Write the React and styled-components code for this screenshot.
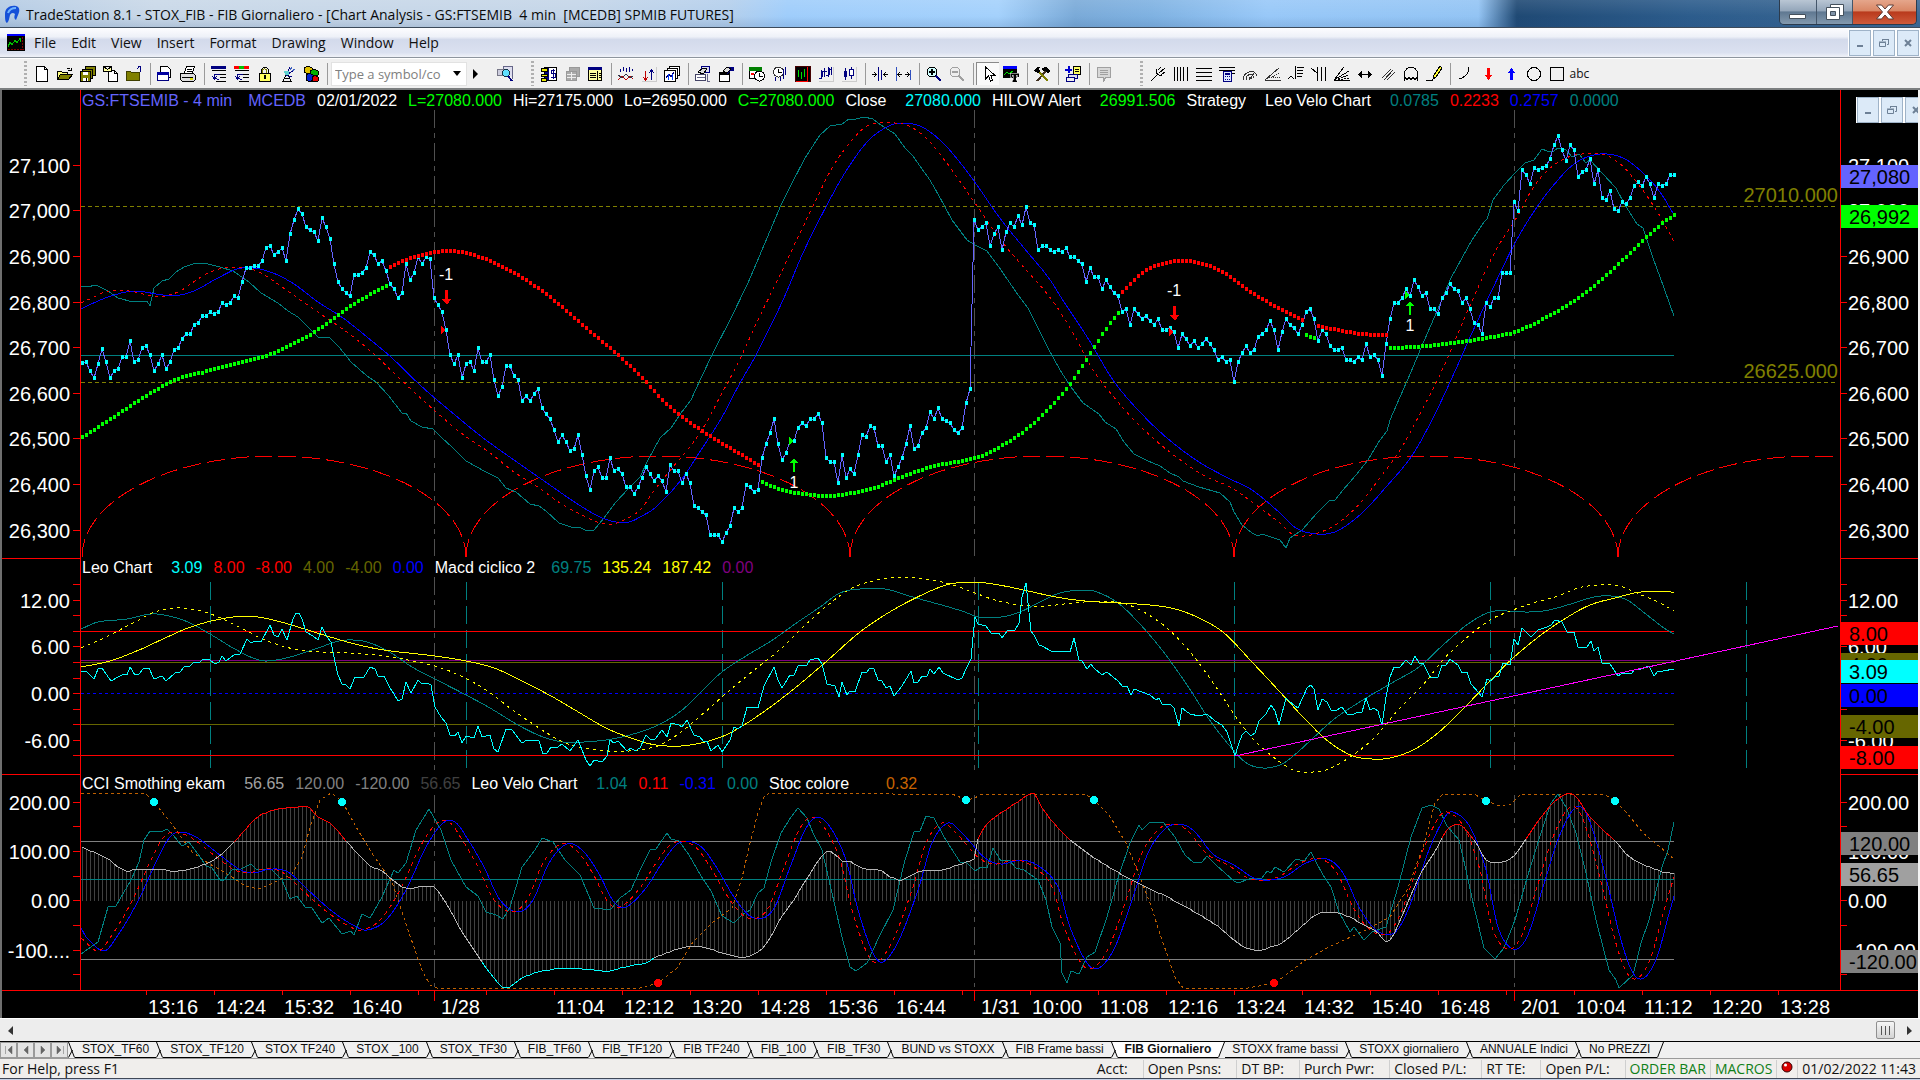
import { Fragment } from "react";
import styled, { createGlobalStyle } from "styled-components";

const GlobalStyle = createGlobalStyle`
  * {
    box-sizing: border-box;
  }

  body {
    margin: 0;
    background: #f0f0f0;
    font-family: "Open Sans", "Noto Sans", sans-serif;
    color: #111;
  }

  button {
    font: inherit;
    color: inherit;
    padding: 0;
    border: 0;
    background: none;
  }
`;

/* ---------- helpers ---------- */

const FIRST_BAR = 82;
const LAST_BAR = 1674;
const BAR_STEP = 4;

const toPoints = (text) =>
  text
    .trim()
    .split(/\s+/)
    .map((pair) => pair.split(",").map(Number));

// cubic interpolation between the key points of a curve
const valueAt = (pts, x) => {
  let i = 1;
  while (i < pts.length - 1 && pts[i][0] < x) i++;
  const p1 = pts[i - 1];
  const p2 = pts[i];
  const p0 = pts[i - 2] || p1;
  const p3 = pts[i + 1] || p2;
  const w = p2[0] - p1[0];
  const t = Math.min(1, Math.max(0, (x - p1[0]) / w));
  const m1 = ((p2[1] - p0[1]) / (p2[0] - p0[0])) * w;
  const m2 = ((p3[1] - p1[1]) / (p3[0] - p1[0])) * w;
  const t2 = t * t;
  const t3 = t2 * t;
  return (
    (2 * t3 - 3 * t2 + 1) * p1[1] +
    (t3 - 2 * t2 + t) * m1 +
    (3 * t2 - 2 * t3) * p2[1] +
    (t3 - t2) * m2
  );
};

const smooth = (pts) => {
  const start = pts[0][0];
  const end = Math.min(LAST_BAR, pts[pts.length - 1][0]);
  const out = [];
  for (let x = start; x < end; x += 2) out.push(`${x},${valueAt(pts, x).toFixed(1)}`);
  out.push(`${end},${valueAt(pts, end).toFixed(1)}`);
  return out.join(" ");
};

const barsBetween = (from, to) => {
  const out = [];
  for (let x = FIRST_BAR; x <= to; x += BAR_STEP) if (x >= from) out.push(x);
  return out;
};

/* ---------- series ---------- */

const PRICE = [
  363, 362, 371, 378, 364, 349, 362, 378, 371, 369, 357, 357, 341, 362, 360, 348, 346, 355, 371, 364,
  355, 369, 362, 350, 348, 339, 334, 334, 325, 323, 316, 316, 312, 314, 312, 303, 305, 303, 296, 298,
  282, 268, 268, 266, 266, 261, 248, 246, 255, 252, 248, 261, 234, 220, 209, 214, 227, 230, 232, 241,
  218, 227, 239, 264, 282, 289, 293, 296, 275, 275, 273, 268, 252, 255, 264, 261, 271, 284, 289, 298,
  293, 264, 280, 273, 257, 264, 257, 259, 298, 305, 312, 330, 355, 364, 355, 378, 364, 362, 371, 348,
  362, 362, 355, 380, 396, 387, 366, 366, 376, 380, 401, 396, 401, 394, 389, 408, 414, 419, 430, 442,
  435, 442, 451, 449, 435, 455, 476, 490, 471, 467, 478, 478, 458, 471, 469, 474, 487, 487, 494, 487,
  478, 467, 474, 481, 476, 481, 492, 465, 471, 471, 483, 474, 483, 506, 508, 512, 515, 535, 535, 535,
  542, 533, 526, 508, 512, 508, 485, 487, 492, 490, 458, 444, 433, 419, 444, 460, 453, 441, 441, 428,
  423, 426, 419, 419, 414, 423, 458, 462, 462, 483, 455, 478, 469, 474, 455, 435, 437, 426, 428, 446,
  446, 462, 455, 476, 467, 458, 444, 426, 449, 446, 433, 428, 412, 419, 408, 419, 421, 423, 430, 433,
  428, 403, 389, 220, 230, 227, 223, 246, 234, 227, 250, 232, 223, 227, 216, 225, 207, 223, 225, 250,
  246, 246, 250, 252, 250, 252, 248, 257, 257, 261, 264, 282, 268, 277, 277, 289, 280, 287, 293, 296,
  312, 309, 325, 309, 314, 319, 316, 321, 325, 319, 330, 330, 328, 332, 348, 334, 339, 346, 341, 348,
  344, 339, 344, 350, 360, 357, 362, 360, 382, 362, 353, 346, 353, 350, 337, 334, 330, 321, 330, 350,
  332, 319, 325, 328, 334, 325, 312, 309, 319, 341, 330, 334, 346, 350, 350, 348, 360, 360, 362, 357,
  360, 344, 357, 355, 360, 376, 344, 319, 303, 303, 298, 289, 296, 280, 287, 296, 293, 309, 309, 314,
  298, 293, 284, 289, 291, 303, 298, 309, 323, 325, 334, 303, 307, 298, 298, 273, 273, 273, 202, 211,
  170, 175, 184, 168, 170, 168, 166, 159, 145, 136, 150, 161, 145, 150, 177, 172, 170, 159, 184, 170,
  198, 200, 191, 209, 211, 202, 204, 198, 186, 182, 186, 177, 184, 198, 184, 186, 184, 175, 175,
];

const VELO_FAST = `81,286 87,287 96,285 108,291 118,298 133,302 147,301 150,306 154,288 162,281 169,279 176,272
184,267 196,263 204,263 220,267 233,271 249,282 261,293 278,303 288,311 298,317 308,327 318,337 330,338 339,347
351,362 367,376 376,382 388,395 402,413 406,413 411,421 422,427 433,429 441,437 453,448 466,461 486,472 498,478
506,488 516,492 530,504 539,506 546,511 559,523 571,527 579,527 587,531 594,530 604,518 616,502 629,488 640,477
648,460 660,438 671,428 681,413 691,400 701,378 713,353 730,320 748,283 762,250 781,205 791,185 805,158 820,135
830,126 842,124 849,119 856,119 864,117 873,119 881,125 895,134 905,148 913,156 922,169 928,177 934,187 944,205
952,220 967,240 975,245 987,251 1001,270 1016,292 1028,308 1038,328 1048,348 1060,370 1071,387 1083,403 1099,414
1105,422 1116,429 1124,442 1134,454 1148,461 1160,466 1170,473 1179,477 1183,481 1199,487 1220,493 1230,502
1234,512 1242,525 1252,533 1258,536 1262,534 1271,537 1280,540 1286,548 1290,538 1302,530 1317,513 1329,501
1335,500 1343,490 1356,475 1368,460 1378,443 1387,431 1390,420 1400,397 1411,372 1421,348 1431,325 1441,302
1451,278 1462,258 1472,240 1484,222 1487,219 1493,200 1504,185 1515,173 1525,163 1534,160 1542,149 1547,151
1554,151 1558,148 1566,150 1572,157 1579,154 1586,163 1590,160 1602,173 1616,188 1625,205 1637,224 1643,228
1653,258 1664,288 1674,316`;

const VELO_MID = toPoints(`81,303 94,297 105,292 118,290 135,292 151,296 165,296 180,291 192,283 208,273 224,268
245,268 261,273 282,287 306,304 331,321 351,335 376,356 400,379 434,410 461,433 490,453 514,472 539,488 563,505
584,516 600,523 612,524 624,520 640,510 656,488 673,467 689,448 705,425 722,393 738,363 758,320 779,277 799,235
816,200 832,168 848,145 864,128 877,123 895,123 909,126 926,138 946,162 975,203 1003,243 1028,272 1052,300
1073,333 1093,370 1118,402 1142,428 1171,453 1203,475 1232,488 1256,505 1280,523 1292,534 1304,536 1321,532
1341,521 1362,501 1382,475 1402,447 1423,408 1439,377 1456,338 1476,292 1496,250 1517,217 1533,188 1549,169
1566,158 1582,154 1602,154 1619,163 1635,180 1651,202 1664,223 1674,242`);

const VELO_SLOW = toPoints(`81,309 98,301 114,295 135,291 163,295 180,295 196,290 216,279 237,269 253,268 273,273
294,284 318,302 343,318 367,337 392,358 420,385 449,410 482,437 514,460 547,483 576,503 600,517 616,522 629,522
640,517 656,507 681,480 701,450 722,417 740,383 756,355 783,300 803,253 828,203 848,168 869,140 889,126 903,123
922,127 942,142 962,165 979,188 999,217 1024,248 1048,277 1064,302 1089,340 1113,380 1138,410 1167,438 1199,462
1228,478 1252,490 1280,513 1296,528 1317,534 1337,531 1362,513 1386,487 1411,457 1431,422 1451,380 1472,333
1492,290 1515,243 1537,207 1558,180 1574,164 1590,156 1607,154 1625,159 1643,173 1660,192 1674,215`);

const GREEN = "#00ff00";
const RED = "#ff0000";
const TEAL = "#008080";
const CYAN = "#00ffff";

const ALERTS = [
  { color: GREEN, d: "82,437 98,427 118,414 139,400 159,388 180,378 204,372 233,364 265,356 286,347 306,337 327,323 347,308 367,296 388,285" },
  { color: RED, d: "390,267 408,259 429,253 449,251 469,254 490,261 514,273 539,289 563,308 588,330 612,350 640,376 664,402 689,422 713,438 738,453 758,465" },
  { color: GREEN, d: "762,482 779,489 803,494 828,496 852,493 877,487 901,477 934,466 975,458 999,447 1024,431 1048,409 1069,385 1089,355 1105,330 1118,313" },
  { color: RED, d: "1122,292 1138,276 1154,266 1179,261 1199,263 1224,273 1252,293 1280,309 1304,321" },
  { color: GREEN, d: "1306,335 1314,338" },
  { color: RED, d: "1318,326 1337,330 1362,334 1387,335" },
  { color: GREEN, d: "1390,348 1415,347 1443,344 1468,341 1492,337 1515,332 1541,320 1566,306 1590,289 1615,267 1639,244 1660,225 1674,215" },
];

const SESSIONS = [434, 974, 1514];
const CYCLES = [210, 466, 722, 978, 1234, 1490, 1746];

const LEO = `81,672 86,671 89,674 94,679 98,669 102,668 111,681 118,677 124,674 127,675 130,667 135,675 139,674 143,669
149,668 154,679 162,676 166,681 175,673 180,672 184,667 190,666 194,662 199,663 203,659 210,660 215,664 219,662
222,656 226,661 235,654 240,654 247,639 251,643 255,641 261,642 270,625 274,635 278,637 282,629 287,640 293,619
296,613 299,613 302,619 306,632 313,636 318,640 322,627 327,637 331,642 334,657 338,675 342,684 346,685 350,689
355,677 364,677 370,667 375,669 378,676 384,676 390,688 394,694 398,701 402,699 406,682 411,693 418,680 422,684
427,683 431,685 435,707 441,717 446,723 450,735 455,736 458,732 462,743 466,736 474,738 478,726 482,737 490,735
494,749 498,752 506,729 512,730 522,743 527,740 539,741 543,754 547,753 551,747 558,747 562,744 570,751 578,740
582,750 586,760 590,766 594,760 602,762 607,756 610,740 614,743 618,741 627,751 631,748 635,751 640,748 646,735
650,739 655,739 662,730 667,737 671,723 679,725 682,727 687,720 694,735 700,737 703,741 707,741 711,751 718,745
722,752 730,740 734,727 738,729 742,726 747,707 758,708 764,686 774,667 778,680 782,688 790,675 794,675 798,666
807,665 810,660 818,658 822,664 827,684 835,686 839,697 842,682 847,695 850,691 855,692 862,672 866,673 870,668
874,669 878,680 882,681 886,688 890,686 894,696 902,686 911,671 914,683 918,682 922,676 927,676 930,669 934,674
939,667 943,673 958,680 962,678 967,667 971,659 973,637 975,617 978,624 986,626 991,633 999,633 1002,638 1008,630
1015,630 1019,623 1022,597 1026,583 1028,603 1031,631 1034,635 1039,645 1042,646 1051,651 1070,652 1074,638
1079,660 1082,661 1087,669 1091,664 1094,668 1102,675 1107,672 1118,681 1123,687 1127,686 1131,695 1134,689
1150,695 1156,700 1159,698 1162,704 1170,704 1174,708 1179,726 1182,708 1190,714 1199,716 1207,714 1215,721
1222,725 1227,732 1235,756 1239,743 1242,735 1246,731 1251,736 1255,733 1259,721 1266,714 1271,705 1275,711
1279,725 1286,698 1290,702 1298,708 1307,688 1311,685 1314,689 1318,710 1322,699 1327,702 1331,710 1335,711
1342,707 1347,714 1354,714 1358,712 1362,712 1366,698 1370,710 1374,708 1378,711 1382,725 1386,697 1390,677
1394,667 1400,667 1406,660 1411,665 1415,656 1419,663 1423,663 1430,677 1438,677 1442,665 1446,665 1450,659
1458,665 1462,673 1467,672 1471,684 1479,693 1482,697 1487,679 1491,681 1495,677 1499,676 1503,663 1510,665
1514,639 1518,645 1522,628 1531,637 1538,630 1547,627 1551,625 1555,620 1562,622 1567,632 1574,632 1578,647
1587,647 1591,641 1594,651 1598,647 1602,663 1610,664 1618,676 1623,673 1632,673 1635,669 1641,669 1649,666
1654,676 1658,671 1663,671 1674,669`;

const MACD_FAST = toPoints(`81,629 98,622 127,619 151,614 169,616 188,622 210,634 233,648 253,658 267,661 290,657
318,648 339,641 353,640 367,642 388,651 412,667 435,679 466,695 490,708 518,725 543,737 563,742 584,742 612,739
640,732 660,724 681,711 701,692 722,672 746,656 771,641 795,624 820,607 840,593 860,589 885,589 909,596 938,604
962,611 979,617 1001,617 1020,612 1040,602 1060,593 1083,590 1097,592 1118,603 1138,622 1162,650 1187,685
1211,722 1235,752 1248,764 1264,768 1280,765 1292,757 1311,740 1333,720 1358,703 1390,684 1419,667 1443,645
1468,624 1490,612 1509,611 1529,612 1549,610 1574,603 1594,597 1611,596 1627,600 1647,615 1664,628 1674,634`);

const MACD_MID = toPoints(`81,648 106,637 135,622 155,612 176,608 196,610 216,616 241,628 265,640 294,649 322,652
351,653 384,656 408,660 435,666 461,676 486,690 510,708 539,728 563,742 584,748 608,751 629,751 640,750 660,745
681,732 705,712 730,690 758,667 783,647 803,627 828,605 852,588 877,580 901,577 926,579 950,584 975,593 995,600
1020,605 1044,606 1073,603 1101,601 1122,603 1142,611 1167,628 1191,653 1216,687 1236,717 1256,742 1280,762
1296,771 1313,772 1329,769 1353,755 1374,738 1398,710 1423,685 1443,660 1464,640 1490,620 1513,610 1533,603
1558,596 1578,588 1598,585 1619,586 1639,594 1660,603 1674,611`);

const MACD_SLOW = toPoints(`81,667 110,661 139,650 163,639 188,628 216,620 245,616 269,619 298,627 327,636 355,644
384,650 435,656 466,661 494,668 522,681 551,696 580,713 608,729 640,741 656,745 681,746 705,742 730,733 762,713
795,688 828,660 860,632 893,610 926,593 950,584 975,582 999,585 1028,591 1056,597 1085,601 1118,603 1150,605
1175,609 1199,618 1224,633 1252,662 1280,692 1304,718 1329,742 1353,756 1372,759 1390,758 1415,749 1439,732
1464,708 1488,683 1513,658 1541,635 1566,618 1590,605 1615,598 1641,592 1674,592`);

const CCI = toPoints(`81,847 108,859 116,866 127,871 135,869 163,869 173,871 194,868 218,857 238,838 255,819 276,809
298,807 307,806 318,817 330,823 349,844 370,866 382,871 394,881 406,888 434,887 447,905 461,930 482,962 498,983
507,988 522,978 543,971 563,968 588,969 608,971 624,967 640,964 646,963 656,957 689,946 707,948 728,955 746,957
764,947 781,918 795,898 809,875 827,851 836,856 843,861 849,861 862,868 879,870 891,877 901,880 920,871 940,870
967,862 975,857 978,839 989,822 1009,808 1031,793 1035,794 1042,808 1064,834 1093,857 1130,879 1171,899 1216,925
1242,946 1258,950 1280,944 1284,942 1298,930 1317,914 1333,912 1347,916 1364,925 1378,933 1388,942 1398,925
1419,877 1437,848 1447,830 1456,824 1462,826 1476,843 1486,860 1500,862 1513,857 1525,840 1545,812 1562,796
1574,795 1590,817 1615,841 1631,858 1660,871 1674,873`);

const CYCLE_FAST = `81,954 98,942 108,907 116,906 131,880 139,862 144,840 150,831 161,832 167,829 173,835 182,846
189,842 200,857 206,866 212,868 220,880 224,880 232,870 241,869 251,864 257,870 271,869 282,880 290,899 297,896
305,907 312,908 322,923 329,918 342,934 351,931 354,935 362,914 370,918 382,897 394,870 398,873 406,863 416,830
429,809 441,830 451,860 466,887 478,896 486,912 496,915 503,919 510,907 522,867 535,850 542,838 553,842 565,860
580,875 594,908 603,909 611,909 620,898 631,890 640,870 650,850 656,849 667,833 671,839 679,841 689,855 701,876
711,891 722,916 734,923 742,915 750,910 758,893 764,888 771,862 781,833 791,817 798,808 807,818 813,833 822,850
832,893 842,937 850,967 856,971 867,963 879,937 893,910 905,860 914,832 920,831 926,816 934,818 944,837 960,862
967,863 975,871 981,867 987,868 993,848 1001,861 1009,860 1016,868 1024,870 1038,880 1046,900 1052,927 1060,943
1062,973 1067,983 1071,971 1079,974 1087,957 1095,952 1107,917 1118,878 1130,843 1139,825 1142,830 1150,822
1163,822 1175,837 1185,855 1194,863 1202,862 1207,856 1216,865 1234,881 1238,883 1252,878 1262,878 1267,871
1271,873 1275,867 1284,872 1296,859 1304,861 1311,852 1316,862 1323,875 1331,887 1339,912 1350,932 1354,927
1364,940 1372,932 1386,927 1398,887 1411,837 1422,808 1431,805 1439,809 1447,826 1459,840 1466,870 1474,907
1484,948 1495,959 1504,948 1515,920 1527,878 1541,833 1551,803 1558,794 1566,807 1576,833 1586,873 1596,920
1609,970 1616,980 1619,988 1633,975 1641,943 1649,920 1662,867 1668,850 1674,822`;

const CYCLE_MID = toPoints(`81,938 98,951 110,938 131,903 151,860 163,838 173,832 190,837 210,852 233,869 247,873
265,869 282,872 302,890 327,912 347,925 361,930 380,920 400,890 420,847 437,823 449,822 461,838 478,867 494,900
512,912 527,900 543,863 561,844 576,850 592,872 608,902 620,907 640,888 656,863 673,843 693,845 709,865 730,900
748,918 767,910 783,870 799,830 811,817 824,827 840,860 852,910 867,953 877,962 893,940 913,887 926,843 942,823
956,833 979,858 995,864 1016,860 1034,867 1052,887 1064,927 1081,963 1093,968 1109,947 1126,900 1142,853
1158,830 1171,824 1187,830 1207,854 1228,865 1248,878 1264,880 1280,876 1300,863 1321,859 1337,873 1353,907
1370,930 1388,933 1402,910 1423,850 1439,817 1447,812 1464,827 1480,870 1492,927 1507,949 1521,937 1537,887
1553,837 1570,807 1582,817 1598,870 1615,940 1627,973 1638,978 1651,957 1664,910 1674,877`);

const CYCLE_SLOW = [[81, 928], ...CYCLE_MID.map(([x, y]) => [x + 6, y])];

const STOC = `81,793 145,793 154,802 171,823 192,852 208,863 229,875 245,886 259,889 273,883 292,874 302,857 310,827
320,800 331,793 342,801 355,825 371,852 392,882 408,930 422,970 430,985 437,988 640,988 658,983 677,968 693,942
713,922 732,908 742,878 750,843 758,813 764,797 769,793 889,793 897,795 922,794 952,794 967,800 975,798 981,794
1085,794 1094,800 1109,815 1126,843 1138,872 1150,903 1162,940 1175,977 1183,988 1248,988 1275,983 1282,978
1304,961 1329,947 1366,930 1390,917 1407,890 1423,847 1435,803 1443,794 1474,794 1486,801 1500,806 1511,804
1521,794 1604,794 1615,801 1627,813 1643,833 1660,847 1674,859`;

/* ---------- toolbar drawings ---------- */

const B = "#000";
const NAVY = "#000080";
const OLIVE = "#808000";
const GREY = "#a0a0a0";

const Line = ({ d, c = B, w = 1, f = "none" }) => (
  <path d={d} stroke={c} strokeWidth={w} fill={f} />
);
const Box = ({ x, y, w, h, f = "#fff", c = B }) => (
  <rect x={x + 0.5} y={y + 0.5} width={w - 1} height={h - 1} fill={f} stroke={c} />
);

const ICONS = {
  "New": <><Line d="M2.5.5h8l3 3v12h-11z" f="#fff" /><Line d="M10.5.5v3h3" /></>,
  "Open": <><Line d="M.5 13.5v-8h4l1 1h5v3" f="#ffff80" /><Line d="M.5 13.5l3-5h12l-4 5z" f={OLIVE} /><Line d="M9.5 3.5c1-2 3-2 4 0M11 4.5h3.500v-3" /></>,
  "Save all": <><Box x={5} y={0} w={11} h={10} f={OLIVE} /><Box x={2} y={3} w={11} h={10} f={OLIVE} /><Box x={0} y={5} w={11} h={11} f={OLIVE} /><path d="M3 6h5v3H3zM3 12h5v3H3z" fill="#fff" /><path d="M6 12h1v3H6z" fill="#000" /></>,
  "Mail document": <><Line d="M5.500 4.500h6l3 3v8h-9z" f="#fff" /><Line d="M11.500 4.500v3h3" /><Line d="M.5.5h8v5h-8zM.5.5l4 3 4-3" f="#ffffa0" /></>,
  "Close folder": <><path d="M0 5h5l1 2h8v8H0z" fill={OLIVE} /><Line d="M.5 5.500h4l1 1h8v8h-13z" c="#404000" /><Line d="M14.500 5.500v-5M11 2.500l3-2M12 .5h3" c={NAVY} /></>,
  "Window": <><Line d="M3.500 7V.5h7l3 3v8h-2" f="#fff" /><Box x={0} y={6} w={12} h={9} c={NAVY} /><path d="M0 6h12v3H0z" fill="#0000a0" /></>,
  "Print": <><Line d="M4.500 7l2-6.500h8l-2 6.500z" f="#fff" /><Line d="M7 3h5M6.500 5h5" /><Line d="M.5 7.500h13l2 2v4l-2 2h-11l-2-2z" f="#ddd" /><Line d="M2 11.500h11" /><path d="M10 12h3v2h-3z" fill="#e0e000" /></>,
  "Restore rows": <><path d="M0 0h15v3H0z" fill={NAVY} /><Line d="M1 4.500h14M9 8.500h6M9 11.500h6M5 15.500h10" /><Line d="M8 13.500H6.500L3.500 11V8.500H9M1 10l2.500 3L6 10" c={NAVY} /></>,
  "Colour rows": <><path d="M0 0h5v3H0z" fill={RED} /><path d="M5 0h5v3H5z" fill="#00c000" /><path d="M10 0h5v3h-5z" fill={RED} /><Line d="M1 4.500h14M9 8.500h6M9 11.500h6M5 15.500h10" /><Line d="M8 13.500H6.500L3.500 11V8.500H9M1 10l2.500 3L6 10" c={NAVY} /></>,
  "Lock": <><Line d="M4.500 7V3.500l2-2h3l2 2V7" /><Line d="M5.500 7V4l2-1.500 2 1.500v3" c={OLIVE} /><Box x={2} y={7} w={12} h={9} f="#ffff60" /><path d="M7 9h2v4H7z" /></>,
  "Satellite": <><Line d="M3 15l4-8 4 8zM4 12h6" /><Line d="M7 7l3-6M8 8l6-4M5 5c0 4 3 6 7 5" c={NAVY} /><path d="M4 5h5v4H5z" fill="#60d0d0" /><Line d="M10 4l2-3M12 5l3-2" c="#4060c0" /></>,
  "Cubes": <><path d="M1 2l4-2 4 2v4L5 8 1 6z" fill="#e0c000" stroke="#000" /><path d="M7 5l4-2 4 2v4l-4 2-4-2z" fill="#00b000" stroke="#000" /><path d="M3 9l3-2 4 2v5l-3 2-4-2z" fill="#0020d0" stroke="#000" /><path d="M9 11l3-2 3 2v4l-3 1-3-1z" fill="#e00000" stroke="#000" /></>,
  "Find symbol": <><Box x={0} y={3} w={8} h={7} f="#ccd" c="#778" /><Line d="M6.500 2.500v-2h9v12" c="#668" f="#dde" /><circle cx="9" cy="7" r="3.500" fill="#60e0ff" stroke="#134" /><Line d="M11 10l4 5" w={2} c={NAVY} /></>,
  "Account": <><Box x={3} y={1} w={13} h={14} f={NAVY} /><path d="M8 2h7v12H8z" fill="#fff" /><path d="M0 2h6v3H0zM0 8h6v2H0zM0 12h5v3H0z" fill="#e8e800" stroke="#000" /><Line d="M14 4.500h-4v3h4v4h-4M12 3v10" c={NAVY} /></>,
  "Orders": <><Box x={5} y={1} w={11} h={10} f="#aaa" c="#999" /><Box x={2} y={5} w={11} h={10} f="#aaa" c="#999" /><Line d="M3 8.500h9M3 11.500h9M7.500 6v8" c="#eee" /></>,
  "Matrix": <><Box x={1} y={1} w={14} h={14} f="#ffffa0" /><path d="M1 1h14v3H1z" fill={NAVY} /><Line d="M10.500 4.500v10M3 7.500h6M3 9.500h6M3 11.500h6M12 7.500h2M12 9.500h2M12 11.500h2" /></>,
  "Insert indicator": <><Line d="M2.500 3v3M5.500 1v4M8.500 2v4M11.500 1v5M14.500 3v2" c={NAVY} /><Line d="M0 14l4-4 4 4 4-4 3 3" c="#c00000" /><Line d="M0 9l4 3 4-4 4 4 3-2" c="#334" /></>,
  "Insert strategy": <><Line d="M4.500 5v9M2 11l2.500 3L7 11" c="#c00000" /><Line d="M10.500 14V4M8 7l2.500-3L13 7" c={NAVY} /><Line d="M15.500 1v14H1" c="#ccc" /></>,
  "Chart windows": <><Box x={5} y={0} w={11} h={10} /><Box x={3} y={2} w={11} h={11} /><Box x={0} y={4} w={12} h={12} /><Line d="M2 12l3-4 2 3 3-5" c={NAVY} /><Line d="M4.500 8v6M8.500 8v6" c="#0040ff" /></>,
  "Format window": <><Box x={6} y={0} w={9} h={7} f="#dde" c={NAVY} /><Line d="M3 6l5-4 4 1-4 5z" f="#ddd" /><Box x={0} y={8} w={11} h={7} c="#446" /><Line d="M2 11.500h8M12 8v7h3" c="#668" /></>,
  "Format symbol": <><Box x={1} y={6} w={11} h={10} /><path d="M1 6h11v3H1z" fill="#000" /><path d="M8 1h8v4h-4l-2 3-3-2z" fill={NAVY} /><Line d="M5 5l4-4 4 2-4 4z" f="#ddd" /></>,
  "Session": <><Box x={0} y={1} w={13} h={12} /><path d="M0 1h13v4H0z" fill="#008000" /><path d="M2 7h3v2H2z" fill={RED} /><circle cx="10.500" cy="10" r="5" fill="#fff" stroke="#000" /><Line d="M10.500 7v3h3" /></>,
  "Interval": <><circle cx="6.500" cy="6" r="5" fill="#fff" stroke="#333" /><Line d="M6.500 3v3h3" /><Line d="M13.500 1v8M11.500 3v10M3.500 11v4M8.500 11v4" c={NAVY} /></>,
  "Colour chart": <><Box x={0} y={0} w={16} h={16} f="#000" c="#400" /><Line d="M3.500 4v7M6.500 6v7M9.500 3v8" c="#00e000" /><Line d="M12.500 1v14H1" c={RED} /></>,
  "Bar chart": <><Line d="M3.500 4v9M1 12.500h2M6.500 2v9M4 5.500h5M10.500 1v10M8 9.500h2M13.500 1v8M11 3.500h2" c={NAVY} /><path d="M3 5h2v6H3zM10 2h2v7h-2z" fill={NAVY} /><Line d="M15.500 1v14H1" c="#ccc" /></>,
  "Candle chart": <><Line d="M4.500 2v12M10.500 1v12" c={NAVY} /><path d="M3 5h3v6H3z" fill={NAVY} /><Box x={8} y={3} w={5} h={7} c={NAVY} /><Line d="M15.500 1v14H1" c="#ccc" /></>,
  "Decrease spacing": <><Line d="M0 8.500h4M2 6l2.500 2.500L2 11M16 8.500h-4M14 6l-2.500 2.500L14 11" /><Line d="M6.500 1v14M9.500 4v10" c={NAVY} /></>,
  "Increase spacing": <><Line d="M1.500 1v14M15.500 4v10" c="#3050c0" /><Line d="M3 8.500h4M5 6L2.500 8.500 5 11M14 8.500h-4M12 6l2.500 2.500L12 11" /></>,
  "Zoom in": <><circle cx="6" cy="6" r="5" fill="#d0ffff" stroke="#000" /><Line d="M3 6h6M6 3v6" w={2} c="#000" /><Line d="M10 10l5 5" c={NAVY} w={2} /></>,
  "Zoom out": <><circle cx="6" cy="6" r="5" fill="#eee" stroke={GREY} /><Line d="M3 6h6" c={GREY} w={2} /><Line d="M10 10l5 5" c={GREY} w={2} /></>,
  "Pointer": <Line d="M5.500 1v12l3-3 2 5 2-1-2-5h4z" f="#fff" />,
  "Text chart": <><path d="M0 0h14v3H0z" fill="#0000ff" /><path d="M0 3h14v9H0z" /><Line d="M1 9l3-3 2 2 4-3" c="#00e000" /><path d="M7 7h9v4h-2V9h-1v5h1v2h-5v-2h1V9H9v2H7z" stroke="#fff" strokeWidth=".5" /></>,
  "Tools": <><Line d="M3 15L12 5" w={2} c="#403020" /><Line d="M3 4l11 11" w={2} c={OLIVE} /><path d="M8 2l4-1 4 4-2 2-3-2-2 0zM0 5l3-4 3 0-1 3 1 1-2 2z" /></>,
  "Workspace": <><Line d="M3.500 0v7M0 3.500h7" c="#0000d0" w={2} /><Box x={8} y={0} w={8} h={9} f="#ffff60" /><Line d="M10 3h4M10 5h4" /><Box x={3} y={8} w={10} h={5} f="#dde" c={NAVY} /><Box x={1} y={11} w={9} h={5} f="#eee" c={NAVY} /></>,
  "Comment": <><Line d="M1.500 1.500h13v10h-5l-2 4v-4h-6z" f="#d8d8d8" c={GREY} /><Line d="M4 4.500h8M4 6.500h8M4 8.500h8" c={GREY} /></>,
  "Pitchfork": <Line d="M1 15l7-7M6.500 3v4l2 2 4 .5M9 7l6-5M8 4l3-3M11 9l4-3" />,
  "Vertical lines": <Line d="M1.500 1v14M4.500 1v14M7.500 1v14M10.500 1v14M14.500 1v14" />,
  "Horizontal lines": <Line d="M0 2.500h16M0 6.500h16M0 10.500h16M0 14.500h16" />,
  "Calculator": <><Line d="M0 1.500h16M0 4.500h16M11 7.500h5" /><Box x={4} y={5} w={9} h={11} f="#dde8ff" c={NAVY} /><path d="M6 7h5v2H6zM6 10h1v1H6zM8 10h1v1H8zM10 10h1v1h-1zM6 13h1v1H6zM8 13h1v1H8zM10 13h1v1h-1z" fill={NAVY} /></>,
  "Arcs": <Line d="M1 14c0-8 12-12 14-4M4 14c0-6 7-8 8-2M7 14l6-8M7 14c0-3 3-4 3-1" c="#333" />,
  "Speed lines": <><Line d="M0 14.500h16M0 14L14 2" c="#333" /><path d="M2 13L15 7M4 12l11-1" stroke="#333" strokeDasharray="1 1" /></>,
  "Price levels": <Line d="M0 13l3-3 3 3M7.500 0v13M9 1.500h7M9 4.500h6M9 7.500h6M9 10.500h5" />,
  "Time lines": <Line d="M0 2l6 5M6.500 1v14M10.500 1v14M14.500 1v14" />,
  "Fan": <><Line d="M0 14.500h16M0 14L10 1M0 14L15 5" /><path d="M4 13l11-4M4 14l11-2" stroke="#000" strokeDasharray="2 1" /></>,
  "Width": <Line d="M1 8.500h14M4.500 5v7M3.500 6v5M2.500 7v3M11.500 5v7M12.500 6v5M13.500 7v3" />,
  "Parallel": <Line d="M2 12L11 3M4 14L13 4M7 14l8-8" c="#333" />,
  "Cycle": <Line d="M1.500 15V8c0-9 13-9 13 0v7M2 11l2 3 2-3 2 3 2-3 2 3 2-3" />,
  "Pencil": <><Line d="M0 14.500h7" /><path d="M7 13l1-4 6-9 2 2-6 9z" fill="#ffff30" stroke="#000" /></>,
  "Arc": <Line d="M12 1c0 7-5 11-10 12" />,
  "Down arrow": <path d="M7 2h3v7h2l-3.500 5L5 9h2z" fill={RED} />,
  "Up arrow": <path d="M7 14h3V7h2L8.500 2 5 7h2z" fill="#0000ff" />,
  "Ellipse": <circle cx="8" cy="8" r="6.500" fill="none" stroke="#000" />,
  "Rectangle": <rect x="1.500" y="1.500" width="13" height="13" fill="none" stroke="#000" />,
};

/* ---------- window chrome ---------- */

const Shell = styled.div`
  width: 100%;
  display: flex;
  flex-direction: column;
  overflow: hidden;
`;

const TitleBar = styled.header`
  height: 28px;
  display: flex;
  align-items: flex-start;
  justify-content: space-between;
  border-bottom: 1px solid #3c4a5a;
  background:
    linear-gradient(180deg, rgba(255, 255, 255, 0.1), rgba(255, 255, 255, 0) 60%, rgba(40, 80, 130, 0.15)),
    linear-gradient(
      90deg,
      #b4cbe4 0%,
      #c9d8e8 8%,
      #c4d5e8 30%,
      #b4cfec 38%,
      #9fcdfb 41%,
      #a4d1fc 52%,
      #7aaad8 56%,
      #7fb2e2 60%,
      #98c8f8 66%,
      #93c4f4 77%,
      #1f4974 79%,
      #2c5c8c 88%,
      #3d6994 100%
    );
`;

const TitleText = styled.h1`
  margin: 0;
  padding: 5px 0 0 4px;
  display: flex;
  align-items: center;
  gap: 6px;
  font-size: 14px;
  line-height: 20px;
  font-weight: 400;
  white-space: pre;
  color: #0a0a0a;
`;

const CaptionButtons = styled.div`
  display: flex;
  margin-right: 3px;
  border: 1px solid #2c3b4d;
  border-top: 0;
  border-radius: 0 0 5px 5px;
  overflow: hidden;
`;

const CaptionButton = styled.button`
  width: ${(p) => (p.$close ? 64 : 36)}px;
  height: 24px;
  display: grid;
  place-items: center;
  border-left: ${(p) => (p.$first ? 0 : 1)}px solid #44566a;
  background: ${(p) =>
    p.$close
      ? "linear-gradient(180deg, #e5a68b 0%, #d98766 45%, #b93a1c 50%, #cf5a3a 100%)"
      : "linear-gradient(180deg, #b9c6d4 0%, #94a6ba 45%, #5f7891 50%, #8399ae 100%)"};
`;

const MenuBar = styled.nav`
  height: 30px;
  display: flex;
  align-items: center;
  padding: 1px 0 0 6px;
  border-bottom: 1px solid #8e959e;
  background: linear-gradient(180deg, #fdfdff 0%, #eef1f8 30%, #d3daeb 40%, #dbe1f0 85%, #f0f2f8 100%);
`;

const MenuItem = styled.button`
  margin-right: 15px;
  font-size: 14px;
  line-height: 20px;
`;

const MenuIcon = styled.svg`
  margin-right: 8px;
`;

const WindowButtons = styled.div`
  display: flex;
  gap: 2px;
  margin-left: auto;
  padding: 0 1px;
  background: #fff;
`;

const FloatingButtons = styled(WindowButtons)`
  position: absolute;
  top: 7px;
  right: -10px;
`;

const WindowButton = styled.button`
  width: 22px;
  height: 26px;
  display: grid;
  place-items: center;
  border: 1px solid #9fb3c8;
  background: #dceaf8;
`;

const ToolRow = styled.div`
  height: 32px;
  display: flex;
  align-items: center;
  padding: 0 0 0 24px;
  background: #f0f0f0;
  border-top: 1px solid #fff;
  border-bottom: 2px solid #7c7f80;
`;

const Grip = styled.span`
  width: 3px;
  height: 25px;
  flex: none;
  margin: 0 3px 0 ${(p) => p.$gap || 0}px;
  background: repeating-linear-gradient(180deg, #b0b0b0 0 2px, transparent 2px 4px);
`;

const Separator = styled.span`
  flex: none;
  width: 1px;
  height: 22px;
  margin: 0 2px 0 5px;
  background: #9a9a9a;
`;

const ToolButton = styled.button`
  flex: none;
  width: ${(p) => (p.$narrow ? 18 : 23)}px;
  height: 23px;
  display: grid;
  place-items: center;
  font-size: 12px;
  font-family: "Open Sans", sans-serif;
  background: ${(p) => (p.$pressed ? "#fafafa" : "none")};
  box-shadow: ${(p) => (p.$pressed ? "inset 1px 1px 0 #8a8a8a" : "none")};
`;

const SymbolBox = styled.div`
  flex: none;
  width: 136px;
  height: 24px;
  margin-left: 1px;
  display: flex;
  align-items: center;
  background: #fff;
  border: 1px solid #e2e2e2;
`;

const SymbolInput = styled.input`
  width: 116px;
  padding: 0 0 0 3px;
  border: 0;
  outline: 0;
  background: none;
  font-family: "Open Sans", sans-serif;
  font-size: 13px;

  &::placeholder {
    color: #808080;
    opacity: 1;
  }
`;

const GoButton = styled(ToolButton)`
  margin-right: 8px;
`;

/* ---------- chart ---------- */

const ChartFrame = styled.main`
  position: relative;
  background: #000;
  border-left: 2px solid #6f6f6f;
  border-right: 2px solid #f4f4f4;
  font-family: "Liberation Sans", Arial, sans-serif;
  overflow: hidden;
`;

const Pane = styled.section`
  display: grid;
  grid-template-columns: 79px minmax(0, 1fr) 78px;
`;

const Middle = styled.div`
  display: flex;
  flex-direction: column;
  min-width: 0;
`;

const Legend = styled.div`
  height: ${(p) => p.$h}px;
  padding: 2px 0 0 1px;
  display: flex;
  align-items: center;
  gap: 11px;
  font-size: 16px;
  line-height: 18px;
  white-space: nowrap;
`;

const LegendItem = styled.span`
  color: ${(p) => p.$color};
  margin-right: ${(p) => p.$after || 0}px;
`;

const Plot = styled.svg`
  display: block;
  width: 100%;
  height: ${(p) => p.$h}px;
  shape-rendering: crispEdges;
  fill: none;

  path,
  line,
  polyline {
    vector-effect: non-scaling-stroke;
  }
`;

const AxisSvg = styled.svg`
  display: block;
  width: 100%;
  shape-rendering: crispEdges;
  font-size: 20px;
`;

/* ---------- bottom ---------- */

const ScrollRow = styled.div`
  height: 23px;
  display: flex;
  align-items: center;
  justify-content: space-between;
  padding: 0 7px;
  background: #ededed;
  border-top: 1px solid #fff;
`;

const ScrollEnd = styled.div`
  display: flex;
  align-items: center;
  gap: 10px;
`;

const ScrollThumb = styled.button`
  width: 19px;
  height: 18px;
  display: grid;
  place-items: center;
  border: 1px solid #8f8f8f;
  border-radius: 2px;
  background: linear-gradient(180deg, #f6f6f6, #d4d4d4);
`;

const TabRow = styled.div`
  height: 17px;
  display: flex;
  border-top: 1px solid #000;
  background: #f0f0f0;
  font-family: "Liberation Sans", Arial, sans-serif;
`;

const TabNav = styled.button`
  flex: none;
  width: 17px;
  height: 16px;
  display: grid;
  place-items: center;
  background: #e4e4e4;
  border: 1px solid #9a9a9a;
`;

const Tab = styled.button`
  flex: none;
  height: 16px;
  padding: 0 7px;
  border-bottom: 1px solid #000;
  font-size: 12px;
  line-height: 15px;
  white-space: pre;
  font-weight: ${(p) => (p.$active ? 700 : 400)};
  background: ${(p) => (p.$active ? "#fff" : "#f0f0f0")};
`;

const TabEdge = styled.svg`
  flex: none;
  display: block;
`;

const StatusBar = styled.footer`
  height: 20px;
  display: flex;
  align-items: center;
  padding-top: 1px;
  border-top: 1px solid #9a9a9a;
  background: #f0eeec;
  font-size: 14px;
  line-height: 18px;
  white-space: nowrap;
`;

const StatusHelp = styled.span`
  flex: 1;
  padding-left: 2px;
`;

const StatusItem = styled.span`
  padding: 0 ${(p) => (p.$tight ? 4 : 15)}px 0 4px;
  border-left: 1px solid ${(p) => (p.$plain ? "transparent" : "#cfcfcf")};
  color: ${(p) => p.$color || "#111"};
`;

const TaskbarEdge = styled.div`
  height: 2px;
  background: #c6d1e6;
  border-top: 1px solid #3f4757;
`;

const MinGlyph = () => (
  <svg width="12" height="12" viewBox="0 0 12 12">
    <path d="M3 8h6v2H3z" fill="#6d8096" />
  </svg>
);

const RestoreGlyph = () => (
  <svg width="12" height="12" viewBox="0 0 12 12" fill="none" stroke="#6d8096">
    <path d="M4.500 4V2.500h6v5H9M4 2.500h7M1.500 5.500h6v4h-6zM1 5h7" />
  </svg>
);

const CloseGlyph = () => (
  <svg width="12" height="12" viewBox="0 0 12 12">
    <path d="M3 3l6 6M9 3l-6 6" stroke="#6d8096" strokeWidth="2" />
  </svg>
);

const MdiButtons = ({ as: Wrap = WindowButtons, label }) => (
  <Wrap>
    <WindowButton aria-label={`Minimize ${label}`}><MinGlyph /></WindowButton>
    <WindowButton aria-label={`Restore ${label}`}><RestoreGlyph /></WindowButton>
    <WindowButton aria-label={`Close ${label}`}><CloseGlyph /></WindowButton>
  </Wrap>
);

const Tool = ({ name }) => (
  <ToolButton aria-label={name} $pressed={name === "Pointer"}>
    <svg width="16" height="16" viewBox="0 0 16 16" shapeRendering="crispEdges">
      {ICONS[name]}
    </svg>
  </ToolButton>
);

const Tools = ({ groups }) =>
  groups.map((group, i) => (
    <Fragment key={group[0]}>
      {i > 0 && <Separator />}
      {group.map((name) => (
        <Tool key={name} name={name} />
      ))}
    </Fragment>
  ));

const FILE_TOOLS = [
  ["New", "Open", "Save all", "Mail document", "Close folder"],
  ["Window", "Print"],
  ["Restore rows", "Colour rows", "Lock", "Satellite", "Cubes"],
];

const CHART_TOOLS = [
  ["Account", "Orders", "Matrix"],
  ["Insert indicator", "Insert strategy", "Chart windows"],
  ["Format window", "Format symbol"],
  ["Session", "Interval", "Colour chart", "Bar chart", "Candle chart"],
  ["Decrease spacing", "Increase spacing"],
  ["Zoom in", "Zoom out"],
  ["Pointer", "Text chart"],
  ["Tools"],
  ["Workspace"],
  ["Comment"],
];

const DRAW_TOOLS = [
  ["Pitchfork", "Vertical lines", "Horizontal lines", "Calculator", "Arcs", "Speed lines", "Price levels", "Time lines", "Fan", "Width", "Parallel", "Cycle", "Pencil"],
  ["Arc", "Down arrow", "Up arrow", "Ellipse", "Rectangle"],
];

/* ---------- axes ---------- */

const PANES = {
  price: {
    top: 90,
    height: 468,
    ticks: [165, 210, 256, 302, 347, 393, 438, 484, 530],
    labels: [
      ["27,100", 165], ["27,000", 210], ["26,900", 256], ["26,800", 302], ["26,700", 347],
      ["26,600", 393], ["26,500", 438], ["26,400", 484], ["26,300", 530],
    ],
    tags: [["27,080", 165, "#6464ff"], ["26,992", 205, GREEN]],
  },
  leo: {
    top: 558,
    height: 216,
    ticks: [584, 600, 615, 631, 646, 662, 678, 693, 709, 724, 740, 755],
    labels: [["12.00", 600], ["6.00", 646], ["0.00", 693], ["-6.00", 740]],
    tags: [
      ["8.00", 622, RED], ["4.00", 653, "#666600"], ["3.09", 660, CYAN],
      ["0.00", 684, "#0000ff"], ["-4.00", 715, "#666600"], ["-8.00", 746, RED],
    ],
  },
  cci: {
    top: 774,
    height: 216,
    ticks: [802, 826, 851, 876, 900, 925, 950, 974],
    labels: [["200.00", 802], ["100.00", 851], ["0.00", 900], ["-100.00", 950, "-100...."]],
    tags: [["120.00", 832, "#808080"], ["56.65", 863, "#a0a0a0"], ["-120.00", 950, "#808080"]],
  },
};

const LeftAxis = ({ pane }) => (
  <AxisSvg height={pane.height} viewBox={`2 ${pane.top} 79 ${pane.height}`}>
    {pane.top > 90 && <path d={`M2 ${pane.top + 0.5}h79`} stroke={RED} />}
    <path d={`M80.5 ${pane.top}v${pane.height}`} stroke={RED} />
    {pane.ticks.map((y) => (
      <path key={y} d={`M73 ${y + 0.5}h8`} stroke={RED} />
    ))}
    {pane.labels.map(([text, y, short]) => (
      <text key={text} x="70" y={y + 8} fill="#fff" textAnchor="end">{short || text}</text>
    ))}
  </AxisSvg>
);

const RightAxis = ({ pane }) => (
  <AxisSvg height={pane.height} viewBox={`1840 ${pane.top} 78 ${pane.height}`}>
    {pane.top > 90 && <path d={`M1840 ${pane.top + 0.5}h78`} stroke={RED} />}
    {pane.ticks.map((y) => (
      <path key={y} d={`M1840 ${y + 0.5}h7`} stroke={RED} />
    ))}
    {pane.labels.map(([text, y]) => (
      <text key={text} x="1848" y={y + 8} fill="#fff">{text}</text>
    ))}
    {pane.tags.map(([text, y, color]) => (
      <g key={text}>
        <rect x="1841" y={y} width="77" height="23" fill={color} />
        <text x="1849" y={y + 19} fill="#000">{text}</text>
      </g>
    ))}
    <path d={`M1840.5 ${pane.top}v${pane.height}`} stroke={RED} />
  </AxisSvg>
);

const HLine = ({ y, color, dash, to = LAST_BAR }) => (
  <path d={`M81 ${y + 0.5}H${to}`} stroke={color} strokeDasharray={dash} />
);

const Sessions = ({ from, to }) =>
  SESSIONS.map((x) => (
    <path key={x} d={`M${x + 0.5} ${from}V${to}`} stroke="#505050" strokeDasharray="18 5 5 5" />
  ));

const MARKS = [
  { x: 446, text: "-1", textY: 280, arrowY: 290, mark: [441, 330] },
  { x: 794, text: "1", textY: 488, arrowY: 458, up: true, mark: [789, 441] },
  { x: 1174, text: "-1", textY: 296, arrowY: 306, mark: [1169, 332] },
  { x: 1410, text: "1", textY: 331, arrowY: 301, up: true, mark: [1405, 295] },
];

const PricePlot = () => (
  <Plot $h={448} viewBox="81 110 1759 448" preserveAspectRatio="none">
    <Sessions from={110} to={556} />
    <HLine y={206} color={OLIVE} dash="4 3" to={1837} />
    <HLine y={382} color={OLIVE} dash="4 3" to={1837} />
    <HLine y={355} color={TEAL} />
    {[82, 466, 850, 1234, 1618].map((x) => (
      <path
        key={x}
        d={x === 1618 ? "M1618 557A192 101 0 0 1 1836 457" : `M${x} 557A192 101 0 0 1 ${x + 384} 557`}
        stroke={RED}
        strokeDasharray="18 6"
      />
    ))}
    <polyline points={VELO_FAST} stroke={TEAL} />
    <polyline points={smooth(VELO_SLOW)} stroke="#0000ff" />
    <polyline points={smooth(VELO_MID)} stroke={RED} strokeDasharray="3 4" />
    <polyline points={PRICE.map((y, i) => `${FIRST_BAR + i * BAR_STEP},${y}`).join(" ")} stroke="#6464ff" />
    {PRICE.map((y, i) => (
      <rect key={i} x={FIRST_BAR + i * BAR_STEP - 1} y={y - 2} width="3" height="4" fill={CYAN} />
    ))}
    {ALERTS.map(({ color, d }) => {
      const pts = toPoints(d);
      return barsBetween(pts[0][0], pts[pts.length - 1][0]).map((x) => (
        <rect key={x} x={x - 1} y={Math.round(valueAt(pts, x)) - 2} width="3" height="4" fill={color} />
      ));
    })}
    {MARKS.map(({ x, text, textY, arrowY, up, mark }) => (
      <g key={x} fill={up ? GREEN : RED}>
        <path d={up ? `M${x} ${arrowY}l4 5h-3v9h-2v-9h-3z` : `M${x - 1} ${arrowY}h3v9h3l-4 6-5-6h3z`} />
        <path d={`M${mark[0]} ${mark[1] - 4}l5 4-5 4z`} />
        <text x={x} y={textY} fontSize="16" fill="#fff" textAnchor="middle">{text}</text>
      </g>
    ))}
    <text x="1838" y="202" fontSize="20" fill={OLIVE} textAnchor="end">27010.000</text>
    <text x="1838" y="378" fontSize="20" fill={OLIVE} textAnchor="end">26625.000</text>
  </Plot>
);

const LeoPlot = () => (
  <Plot $h={198} viewBox="81 576 1759 198" preserveAspectRatio="none">
    <Sessions from={577} to={771} />
    {CYCLES.map((x) => (
      <path key={x} d={`M${x + 0.5} 582V768`} stroke={TEAL} strokeDasharray="18 6" />
    ))}
    <HLine y={631} color={RED} />
    <HLine y={660} color="#800080" />
    <HLine y={662} color="#666600" />
    <HLine y={693} color="#0000ff" dash="3 3" />
    <HLine y={724} color="#666600" />
    <HLine y={755} color={RED} />
    <polyline points={smooth(MACD_FAST)} stroke={TEAL} />
    <polyline points={smooth(MACD_MID)} stroke="#ffff00" strokeDasharray="3 4" />
    <polyline points={smooth(MACD_SLOW)} stroke="#ffff00" />
    <polyline points={LEO} stroke={CYAN} />
    <path d="M1235 756L1838 626" stroke="#ff00ff" />
  </Plot>
);

const cciColor = (y) => (y < 841 ? RED : y > 959 ? CYAN : "#b4b4b4");

const CciPlot = () => {
  const bars = barsBetween(FIRST_BAR, LAST_BAR);
  return (
    <Plot $h={198} viewBox="81 792 1759 198" preserveAspectRatio="none">
      {bars.map((x) => (
        <path key={x} d={`M${x + 0.5} 901V${Math.round(valueAt(CCI, x))}`} stroke="#404040" />
      ))}
      <Sessions from={795} to={987} />
      <HLine y={841} color="#808080" />
      <HLine y={879} color={TEAL} />
      <HLine y={959} color="#808080" />
      <polyline points={STOC} stroke="#c06000" strokeDasharray="3 3" />
      <polyline points={CYCLE_FAST} stroke={TEAL} />
      <polyline points={smooth(CYCLE_SLOW)} stroke="#0000ff" />
      <polyline points={smooth(CYCLE_MID)} stroke={RED} strokeDasharray="4 4" />
      {bars.slice(1).map((x) => {
        const from = Math.round(valueAt(CCI, x - BAR_STEP));
        const to = Math.round(valueAt(CCI, x));
        return <path key={x} d={`M${x - BAR_STEP} ${from}L${x} ${to}`} stroke={cciColor((from + to) / 2)} />;
      })}
      {[[154, 802], [342, 802], [966, 800], [1094, 800], [1486, 801], [1615, 801]].map(([x, y]) => (
        <circle key={x} cx={x} cy={y} r="4" fill={CYAN} />
      ))}
      {[658, 1274].map((x) => (
        <circle key={x} cx={x} cy="983" r="4" fill={RED} />
      ))}
    </Plot>
  );
};

const TIMES = [
  ["13:16", 146], ["14:24", 214], ["15:32", 282], ["16:40", 350], ["", 418], ["1/28", 434, true],
  ["", 486], ["11:04", 554], ["12:12", 622], ["13:20", 690], ["14:28", 758], ["15:36", 826],
  ["16:44", 894], ["", 962], ["1/31", 974, true], ["10:00", 1030], ["11:08", 1098], ["12:16", 1166],
  ["13:24", 1234], ["14:32", 1302], ["15:40", 1370], ["16:48", 1438], ["", 1506], ["2/01", 1514, true],
  ["10:04", 1574], ["11:12", 1642], ["12:20", 1710], ["13:28", 1778],
];

const TimeAxis = () => (
  <Plot $h={28} viewBox="2 990 1916 28" preserveAspectRatio="none">
    <path d="M2 990.5H1918" stroke={RED} />
    {TIMES.map(([text, x, day]) => (
      <g key={x}>
        <path d={`M${x + 0.5} 990v${day ? 11 : 5}`} stroke={RED} />
        <text x={x + (day ? 7 : 2)} y="1014" fontSize="20" fill="#fff">{text}</text>
      </g>
    ))}
  </Plot>
);

const PRICE_LEGEND = [
  ["GS:FTSEMIB - 4 min", "#6464ff", 5], ["MCEDB", "#6464ff"], ["02/01/2022", "#fff"], ["L=27080.000", GREEN],
  ["Hi=27175.000", "#fff"], ["Lo=26950.000", "#fff"], ["C=27080.000", GREEN], ["Close", "#fff", 8],
  ["27080.000", CYAN], ["HILOW Alert", "#fff", 8], ["26991.506", GREEN], ["Strategy", "#fff", 8],
  ["Leo Velo Chart", "#fff", 8], ["0.0785", TEAL], ["0.2233", RED], ["0.2757", "#0000ff"], ["0.0000", TEAL],
];

const LEO_LEGEND = [
  ["Leo Chart", "#fff", 8], ["3.09", CYAN], ["8.00", RED], ["-8.00", RED], ["4.00", "#666600"],
  ["-4.00", "#666600"], ["0.00", "#0000ff"], ["Macd ciclico 2", "#fff", 5], ["69.75", TEAL],
  ["135.24", "#ffff00"], ["187.42", "#ffff00"], ["0.00", "#800080"],
];

const CCI_LEGEND = [
  ["CCI Smothing ekam", "#fff", 8], ["56.65", "#a0a0a0"], ["120.00", "#808080"], ["-120.00", "#808080"],
  ["56.65", "#404040"], ["Leo Velo Chart", "#fff", 8], ["1.04", TEAL], ["0.11", RED], ["-0.31", "#0000ff"],
  ["0.00", TEAL], ["Stoc colore", "#fff", 26], ["0.32", "#c86400"],
];

const ChartPane = ({ pane, legend, legendHeight, children }) => (
  <Pane>
    <LeftAxis pane={pane} />
    <Middle>
      <Legend $h={legendHeight}>
        {legend.map(([text, color, after], i) => (
          <LegendItem key={i} $color={color} $after={after}>{text}</LegendItem>
        ))}
      </Legend>
      {children}
    </Middle>
    <RightAxis pane={pane} />
  </Pane>
);

const TABS = [
  "STOX_TF60", "STOX_TF120", "STOX TF240", "STOX _100", "STOX_TF30", "FIB_TF60", "FIB_TF120",
  "FIB TF240", "FIB_100", "FIB_TF30", "BUND vs STOXX", "FIB Frame bassi", "FIB Giornaliero",
  "STOXX frame bassi", "STOXX giornaliero", "ANNUALE Indici", "No PREZZI",
];
const ACTIVE_TAB = "FIB Giornaliero";

const Edge = ({ kind }) => (
  <TabEdge width="7" height="16" viewBox="0 0 7 16" fill="none" stroke="#000">
    {kind === "afterActive" && <path d="M0 0h7L1 16H0z" fill="#fff" stroke="none" />}
    {kind === "beforeActive" && <path d="M0 0h7v16H6z" fill="#fff" stroke="none" />}
    {kind === "afterActive" || kind === "last" ? (
      <path d="M6.500 0L.5 15.500" />
    ) : (
      <path d="M.5 0l6 15.500M4.500 8l-4 7.500" />
    )}
  </TabEdge>
);

const edgeKind = (i) => {
  if (i === TABS.length - 1) return "last";
  if (TABS[i] === ACTIVE_TAB) return "afterActive";
  return TABS[i + 1] === ACTIVE_TAB ? "beforeActive" : "plain";
};

const NAV = [
  ["First tab", "M3.500 3v8M10 3L6 7l4 4z"],
  ["Previous tab", "M9 3L5 7l4 4z"],
  ["Next tab", "M5 3l4 4-4 4z"],
  ["Last tab", "M10.500 3v8M4 3l4 4-4 4z"],
];

export default function App() {
  return (
    <Shell>
      <GlobalStyle />
      <TitleBar>
        <TitleText>
          <svg width="16" height="20" viewBox="0 0 16 20">
            <path d="M1 9C1 3 6 0 12 1c4 1 4 5 2 9l-2 5c-2-1-2-3-1-6-2-2-4-1-5 1-1 4-1 6-3 8-2-1-2-5-2-9z" fill="#1550d8" />
            <path d="M4 8c1-3 4-5 8-5" stroke="#6fb4ff" strokeWidth="2" fill="none" />
          </svg>
          {"TradeStation 8.1 - STOX_FIB - FIB Giornaliero - [Chart Analysis - GS:FTSEMIB  4 min  [MCEDB] SPMIB FUTURES]"}
        </TitleText>
        <CaptionButtons>
          <CaptionButton $first aria-label="Minimize">
            <svg width="20" height="18" viewBox="0 0 20 18">
              <path d="M1.500 11.500h16v4h-16z" fill="#fff" stroke="#44505c" />
            </svg>
          </CaptionButton>
          <CaptionButton aria-label="Restore">
            <svg width="20" height="18" viewBox="0 0 20 18" fill="#fff" stroke="#44505c">
              <path d="M5.500 1.500h13v11h-13z" />
              <path d="M1.500 4.500h13v12h-13z" />
              <path d="M5.500 8.500h5v4h-5z" fill="#8093a8" />
            </svg>
          </CaptionButton>
          <CaptionButton $close aria-label="Close">
            <svg width="20" height="18" viewBox="0 0 20 18">
              <path d="M1.500 2h5L10 6l3.500-4h5l-6 7 6 7h-5L10 12l-3.500 4h-5l6-7z" fill="#fff" stroke="#5a3a34" />
            </svg>
          </CaptionButton>
        </CaptionButtons>
      </TitleBar>

      <MenuBar>
        <MenuIcon width="20" height="18" viewBox="0 0 20 18" shapeRendering="crispEdges">
          <path d="M1 0h18v17H1z" />
          <path d="M1 0h18v2H1z" fill="#0000ff" />
          <path d="M2 13l2-5 2 3 3-5 2 3 3-5 1 4" stroke="#00c000" fill="none" />
          <path d="M16.500 3v13M2 15.500h16" stroke="#800000" strokeDasharray="2 1" />
        </MenuIcon>
        {["File", "Edit", "View", "Insert", "Format", "Drawing", "Window", "Help"].map((item) => (
          <MenuItem key={item}>{item}</MenuItem>
        ))}
        <MdiButtons label="workspace" />
      </MenuBar>

      <ToolRow>
        <Grip />
        <Tools groups={FILE_TOOLS} />
        <Separator />
        <SymbolBox>
          <SymbolInput aria-label="Symbol or command" placeholder="Type a symbol/co" />
          <ToolButton $narrow aria-label="Symbol history">
            <svg width="10" height="6" viewBox="0 0 10 6"><path d="M1 0h8L5 5z" /></svg>
          </ToolButton>
        </SymbolBox>
        <GoButton $narrow aria-label="Go">
          <svg width="6" height="10" viewBox="0 0 6 10"><path d="M0 0l5 5-5 5z" /></svg>
        </GoButton>
        <Tool name="Find symbol" />
        <Grip $gap={15} />
        <Tools groups={CHART_TOOLS} />
        <Grip $gap={25} />
        <Tools groups={DRAW_TOOLS} />
        <ToolButton aria-label="Text">abc</ToolButton>
      </ToolRow>

      <ChartFrame>
        <ChartPane pane={PANES.price} legend={PRICE_LEGEND} legendHeight={20}>
          <PricePlot />
        </ChartPane>
        <ChartPane pane={PANES.leo} legend={LEO_LEGEND} legendHeight={18}>
          <LeoPlot />
        </ChartPane>
        <ChartPane pane={PANES.cci} legend={CCI_LEGEND} legendHeight={18}>
          <CciPlot />
        </ChartPane>
        <TimeAxis />
        <MdiButtons as={FloatingButtons} label="chart" />
      </ChartFrame>

      <ScrollRow>
        <button aria-label="Scroll left">
          <svg width="8" height="10" viewBox="0 0 8 10"><path d="M6 0v9L1 5z" fill="#333" /></svg>
        </button>
        <ScrollEnd>
          <ScrollThumb aria-label="Scroll position">
            <svg width="11" height="9" viewBox="0 0 11 9"><path d="M1.500 0v9M5.500 0v9M9.500 0v9" stroke="#555" /></svg>
          </ScrollThumb>
          <button aria-label="Scroll right">
            <svg width="8" height="10" viewBox="0 0 8 10"><path d="M2 0v9l5-4z" fill="#333" /></svg>
          </button>
        </ScrollEnd>
      </ScrollRow>

      <TabRow>
        {NAV.map(([label, d]) => (
          <TabNav key={label} aria-label={label}>
            <svg width="14" height="14" viewBox="0 0 14 14"><path d={d} fill="#666" stroke="#666" strokeWidth=".5" /></svg>
          </TabNav>
        ))}
        <Edge kind="plain" />
        {TABS.map((tab, i) => (
          <Fragment key={tab}>
            <Tab $active={tab === ACTIVE_TAB}>{tab}</Tab>
            <Edge kind={edgeKind(i)} />
          </Fragment>
        ))}
      </TabRow>

      <StatusBar>
        <StatusHelp>For Help, press F1</StatusHelp>
        <StatusItem $plain>Acct:</StatusItem>
        <StatusItem>Open Psns:</StatusItem>
        <StatusItem>DT BP:</StatusItem>
        <StatusItem>Purch Pwr:</StatusItem>
        <StatusItem>Closed P/L:</StatusItem>
        <StatusItem>RT TE:</StatusItem>
        <StatusItem>Open P/L:</StatusItem>
        <StatusItem $tight $color="#108018">ORDER BAR</StatusItem>
        <StatusItem $tight $color="#108018">MACROS</StatusItem>
        <StatusItem $tight>
          <svg width="12" height="14" viewBox="0 0 12 14">
            <circle cx="6" cy="7" r="5" fill="#d80000" stroke="#300" />
            <circle cx="4.500" cy="5" r="1.500" fill="#fff" />
          </svg>
        </StatusItem>
        <StatusItem $tight>01/02/2022 11:43</StatusItem>
      </StatusBar>
      <TaskbarEdge />
    </Shell>
  );
}
